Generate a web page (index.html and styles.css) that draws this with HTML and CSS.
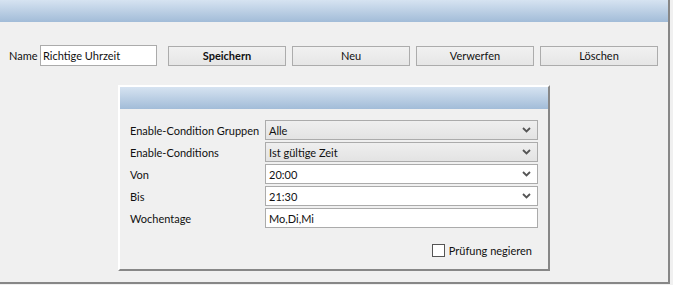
FILE: index.html
```html
<!DOCTYPE html>
<html>
<head>
<meta charset="utf-8">
<link rel="stylesheet" href="styles.css">
</head>
<body>
<div class="window">
  <div class="titlebar"></div>
  <div class="toolbar">
    <label class="name-label">Name</label>
    <div class="textbox name-box">Richtige Uhrzeit</div>
    <div class="buttons">
      <div class="btn bold">Speichern</div>
      <div class="btn">Neu</div>
      <div class="btn">Verwerfen</div>
      <div class="btn">Löschen</div>
    </div>
  </div>
  <div class="panel">
    <div class="panel-head"></div>
    <div class="form">
      <div class="label">Enable-Condition Gruppen</div>
      <div class="field combo grey"><span>Alle</span><svg class="chev" width="9" height="6" viewBox="0 0 9 6"><path d="M1 1 L4.5 4.5 L8 1" fill="none" stroke="#555" stroke-width="1.8"/></svg></div>
      <div class="label">Enable-Conditions</div>
      <div class="field combo grey"><span>Ist gültige Zeit</span><svg class="chev" width="9" height="6" viewBox="0 0 9 6"><path d="M1 1 L4.5 4.5 L8 1" fill="none" stroke="#555" stroke-width="1.8"/></svg></div>
      <div class="label">Von</div>
      <div class="field combo"><span>20:00</span><svg class="chev" width="9" height="6" viewBox="0 0 9 6"><path d="M1 1 L4.5 4.5 L8 1" fill="none" stroke="#555" stroke-width="1.8"/></svg></div>
      <div class="label">Bis</div>
      <div class="field combo"><span>21:30</span><svg class="chev" width="9" height="6" viewBox="0 0 9 6"><path d="M1 1 L4.5 4.5 L8 1" fill="none" stroke="#555" stroke-width="1.8"/></svg></div>
      <div class="label">Wochentage</div>
      <div class="field"><span>Mo,Di,Mi</span></div>
    </div>
    <div class="check-row">
      <span class="checkbox"></span>
      <span class="check-label">Prüfung negieren</span>
    </div>
  </div>
</div>
</body>
</html>
```
FILE: styles.css
```css
html, body {
  margin: 0;
  padding: 0;
  background: #f0f0f0;
}
body {
  font-family: Lato, "Liberation Sans", sans-serif;
  font-size: 11px;
  color: #111;
}
.window {
  width: 668px;
  height: 282px;
  border-right: 2px solid #878787;
  border-bottom: 2px solid #878787;
  background: #f0f0f0;
}
.titlebar {
  height: 22px;
  background: linear-gradient(#d6e3f1, #a2bcd8);
}
.toolbar {
  display: flex;
  align-items: center;
  margin-top: 23px;
  padding-left: 9px;
  height: 21px;
}
.name-label {
  width: 31px;
}
.textbox {
  box-sizing: border-box;
  height: 21px;
  border: 1px solid #ababab;
  background: #fff;
  display: flex;
  align-items: center;
  padding-left: 2px;
}
.name-box {
  width: 117px;
}
.buttons {
  display: flex;
  gap: 6px;
  margin-left: 11px;
}
.btn {
  box-sizing: border-box;
  width: 118px;
  height: 20px;
  border: 1px solid #acacac;
  background: linear-gradient(#f1f1f1, #e6e6e6);
  display: flex;
  align-items: center;
  justify-content: center;
}
.bold {
  font-weight: bold;
}
.panel {
  box-sizing: border-box;
  margin-top: 19px;
  margin-left: 118px;
  width: 432px;
  height: 186px;
  border-left: 2px solid #ffffff;
  border-top: 2px solid #ffffff;
  border-right: 2px solid #878787;
  border-bottom: 2px solid #878787;
  background: #f0f0f0;
}
.panel-head {
  height: 22px;
  background: linear-gradient(#d6e3f1, #a2bcd8);
}
.form {
  display: grid;
  grid-template-columns: 135px 273px;
  row-gap: 2px;
  margin-top: 11px;
  padding-left: 10px;
}
.label {
  height: 20px;
  display: flex;
  align-items: center;
  white-space: nowrap;
}
.field {
  box-sizing: border-box;
  height: 20px;
  border: 1px solid #ababab;
  background: #fff;
  display: flex;
  align-items: center;
  justify-content: space-between;
  padding: 0 6px 0 3px;
}
.grey {
  background: linear-gradient(#efefef, #e3e3e3);
}
.chev {
  display: block;
}
.check-row {
  display: flex;
  align-items: center;
  justify-content: flex-end;
  margin-top: 15px;
  padding-right: 16px;
  height: 14px;
}
.checkbox {
  box-sizing: border-box;
  width: 13px;
  height: 13px;
  border: 1px solid #555;
  background: #fff;
  margin-right: 4px;
}
```
